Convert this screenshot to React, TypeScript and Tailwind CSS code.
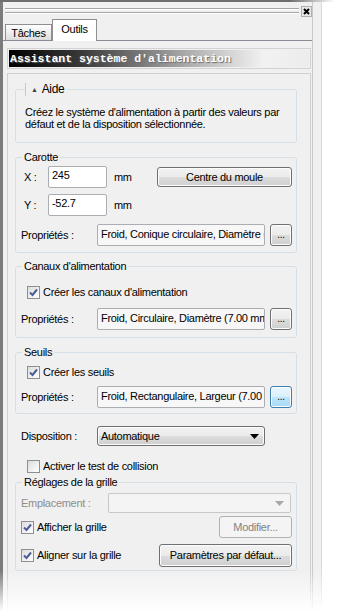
import type { ReactNode } from "react";

const btnBase =
  "flex items-center justify-center rounded-[3px] border border-[#707070] bg-[linear-gradient(#f2f2f2_0%,#ebebeb_50%,#dddddd_50%,#cfcfcf_100%)] shadow-[inset_0_0_0_1px_#fcfcfc]";
const btnHot =
  "flex items-center justify-center rounded-[3px] border border-[#3c7fb1] bg-[linear-gradient(#eaf6fd_0%,#d9f0fc_50%,#bee6fd_50%,#a7d9f5_100%)] shadow-[inset_0_0_0_1px_#fcfcfc]";
const btnOff =
  "flex items-center justify-center rounded-[3px] border border-[#adb2b5] bg-[#f4f4f4] text-[#838383]";

const Check = ({ checked }: { checked?: boolean }) => (
  <span className="flex h-[13px] w-[13px] shrink-0 items-center justify-center border border-[#8e8f8f] bg-[linear-gradient(135deg,#dcdcdc,#ffffff)]">
    {checked && (
      <svg width="9" height="9" viewBox="0 0 9 9">
        <path d="M1 4.5 L3.5 7 L8 1.5" fill="none" stroke="#4a5f97" strokeWidth="2" />
      </svg>
    )}
  </span>
);

const Arrow = ({ color = "#000" }: { color?: string }) => (
  <svg width="9" height="5" viewBox="0 0 9 5">
    <path d="M0 0 H9 L4.5 5 Z" fill={color} />
  </svg>
);

const Group = ({ legend, children, className }: { legend: ReactNode; children: ReactNode; className: string }) => (
  <fieldset className={"rounded-[3px] border border-[#d5dfe5] " + className}>
    <legend className="ml-[6px] px-[2px] leading-[13px]">{legend}</legend>
    {children}
  </fieldset>
);

const PropsRow = ({ value, hot }: { value: string; hot?: boolean }) => (
  <div className="flex items-center pl-[5px]">
    <span className="w-[76px]">Propriétés :</span>
    <div className="h-[22px] w-[168px] overflow-hidden text-clip whitespace-nowrap rounded-[2px] border border-[#abadb3] bg-[#f7f7f7] pl-[3px] pt-[3px] leading-[13px]">
      {value}
    </div>
    <button className={(hot ? btnHot : btnBase) + " ml-[5px] h-[22px] w-[22px] pb-[2px] text-[10px]"}>...</button>
  </div>
);

export default function App() {
  return (
    <div className="relative flex h-[616px] w-[343px] flex-col overflow-hidden bg-white font-['Liberation_Sans',Arial,sans-serif] text-[11px] leading-[13px] tracking-[-0.3px] text-black">
      <div className="h-[2px] shrink-0 bg-[linear-gradient(to_right,#6e6e6e_0px,#6e6e6e_290px,#ffffff_335px)]" />
      <div className="flex flex-1">
        <div className="flex w-[313px] flex-col border-l-[3px] border-r border-l-[#7b7b7b] border-r-[#c9c9c9] bg-[#f0f0f0]">
          {/* grip + close */}
          <div className="flex h-[18px] items-center gap-[2px] pl-[2px]">
            <div className="flex flex-1 flex-col gap-[2px]">
              <div className="border-b border-t border-b-white border-t-[#a6a6a6]" />
              <div className="border-b border-t border-b-white border-t-[#a6a6a6]" />
            </div>
            <div className="flex h-[11px] w-[11px] items-center justify-center border border-[#b0b0b0] bg-[#e8e8e8]">
              <svg width="7" height="7" viewBox="0 0 7 7">
                <path d="M1 1 L6 6 M6 1 L1 6" stroke="#000" strokeWidth="2" />
              </svg>
            </div>
          </div>

          {/* tabs */}
          <div className="flex h-[21px] items-end border-b border-[#898c95] pl-[2px]">
            <div className="flex h-[16px] w-[47px] items-center justify-center border border-b-0 border-[#8f8f8f] bg-[linear-gradient(#ffffff,#dcdcdc)] pt-[1px]">
              Tâches
            </div>
            <div className="-mb-px flex h-[22px] w-[45px] justify-center border border-b-0 border-[#8f8f8f] bg-white pt-[3px]">
              Outils
            </div>
          </div>

          {/* header */}
          <div className="ml-[4px] mr-[1px] mt-[7px] h-[21px] border border-[#d2d2d2] p-[1px]">
            <div className="flex h-full items-center bg-[linear-gradient(to_right,#000000_0%,#3c3c3c_25%,#bdbdbd_65%,#f2f2f2_85%,#ececec_100%)] pl-[1px] font-['Liberation_Mono',monospace] text-[11.5px] font-bold tracking-normal text-white [text-shadow:1px_1px_1px_#6a6a6a]">
              Assistant système d'alimentation
            </div>
          </div>

          {/* main panel */}
          <div className="ml-[4px] mr-[1px] mt-[4px] flex flex-1 flex-col border-l border-r border-t border-[#d0d0d0] pl-[7px] pr-[13px]">
            <fieldset className="mt-[9px] rounded-[3px] border border-[#d5dfe5]">
              <legend className="ml-[9px] flex items-center border-l border-[#c8c8c8] pr-[3px] leading-[13px]">
                <span className="ml-[5px] mr-[4px] text-[7px] text-[#444]">▲</span>
                <span className="text-[12px]">Aide</span>
              </legend>
              <p className="mt-[10px] pb-[12px] pl-[9px] leading-[12px]">
                Créez le système d'alimentation à partir des valeurs par défaut et de la disposition sélectionnée.
              </p>
            </fieldset>

            <Group legend="Carotte" className="mt-[8px] pb-[6px]">
              <div className="mt-[2px] flex items-center pl-[8px]">
                <span className="w-[24px]">X :</span>
                <div className="h-[22px] w-[59px] rounded-[2px] border border-[#abadb3] bg-white pl-[3px] pt-[2px]">245</div>
                <span className="ml-[7px] w-[43px]">mm</span>
                <button className={btnBase + " h-[20px] w-[135px]"}>Centre du moule</button>
              </div>
              <div className="mt-[6px] flex items-center pl-[8px]">
                <span className="w-[24px]">Y :</span>
                <div className="h-[22px] w-[59px] rounded-[2px] border border-[#abadb3] bg-white pl-[3px] pt-[2px]">-52.7</div>
                <span className="ml-[7px]">mm</span>
              </div>
              <div className="mt-[8px]">
                <PropsRow value="Froid, Conique circulaire, Diamètre (7.00 mm)" />
              </div>
            </Group>

            <Group legend="Canaux d'alimentation" className="mt-[7px] pb-[7px]">
              <label className="mt-[13px] flex items-center gap-[3px] pl-[11px]">
                <Check checked />
                Créer les canaux d'alimentation
              </label>
              <div className="mt-[9px]">
                <PropsRow value="Froid, Circulaire, Diamètre (7.00 mm)" />
              </div>
            </Group>

            <Group legend="Seuils" className="mt-[8px] pb-[5px]">
              <label className="mt-[7px] flex items-center gap-[3px] pl-[11px]">
                <Check checked />
                Créer les seuils
              </label>
              <div className="mt-[7px]">
                <PropsRow value="Froid, Rectangulaire, Largeur (7.00 mm)" hot />
              </div>
            </Group>

            <div className="mt-[12px] flex items-center pl-[6px]">
              <span className="w-[76px]">Disposition :</span>
              <div className={btnBase + " h-[20px] w-[168px] justify-between! pl-[3px] pr-[5px]"}>
                <span>Automatique</span>
                <Arrow />
              </div>
            </div>

            <label className="mt-[14px] flex items-center gap-[3px] pl-[12px]">
              <Check />
              Activer le test de collision
            </label>

            <Group legend="Réglages de la grille" className="mt-[3px] pb-[3px]">
              <div className="mt-[4px] flex items-center pl-[5px]">
                <span className="w-[87px] text-[#8d8d8d]">Emplacement :</span>
                <div className="flex h-[20px] w-[183px] items-center justify-end rounded-[2px] border border-[#c8c8c8] bg-[#f4f4f4] pr-[6px]">
                  <Arrow color="#a8a8a8" />
                </div>
              </div>
              <div className="mt-[3px] flex items-center justify-between pl-[5px] pr-[4px]">
                <label className="flex items-center gap-[3px]">
                  <Check checked />
                  Afficher la grille
                </label>
                <button className={btnOff + " h-[22px] w-[73px]"}>Modifier...</button>
              </div>
              <div className="mt-[6px] flex items-center justify-between pl-[5px] pr-[4px]">
                <label className="flex items-center gap-[3px]">
                  <Check checked />
                  Aligner sur la grille
                </label>
                <button className={btnBase + " h-[23px] w-[133px]"}>Paramètres par défaut...</button>
              </div>
            </Group>
          </div>
        </div>
        <div className="w-[9px] border-r border-[#dadada] bg-[#f0f0f0]" />
        <div className="flex-1 bg-white" />
      </div>

      {/* fade-out reflection at the bottom */}
      <div className="pointer-events-none absolute bottom-0 left-0 h-[46px] w-full bg-[linear-gradient(rgba(255,255,255,0),#ffffff_90%)]" />
    </div>
  );
}
